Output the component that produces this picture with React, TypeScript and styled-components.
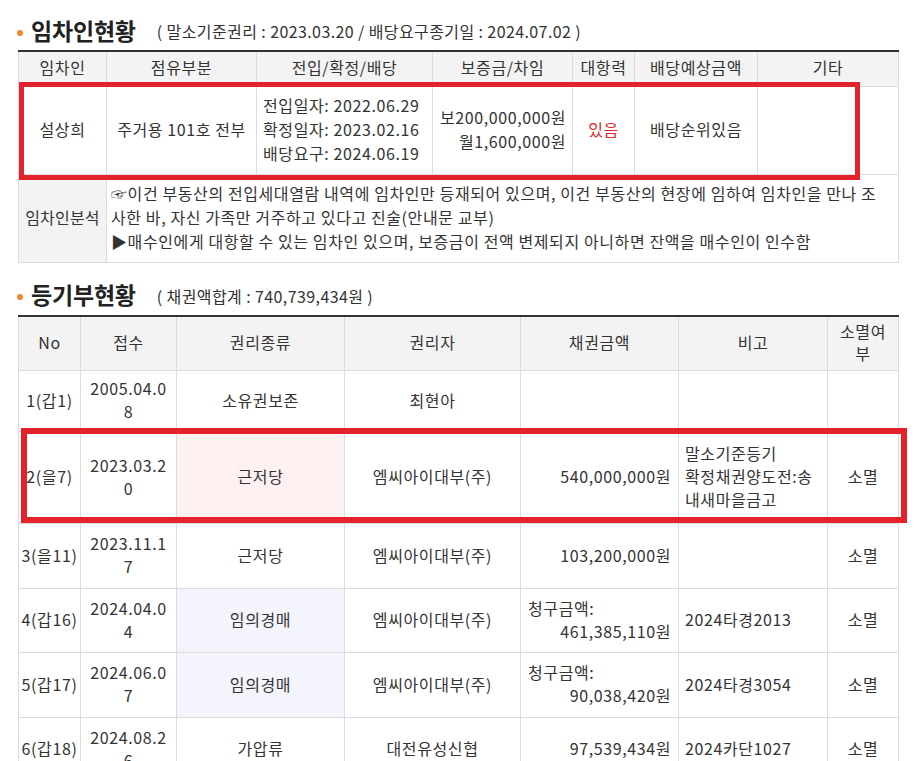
import React from "react";
import styled, { createGlobalStyle } from "styled-components";

const GlobalStyle = createGlobalStyle`
  html, body { margin: 0; padding: 0; background: #fff; }
  body {
    font-family: "Noto Sans CJK KR", "Noto Sans", sans-serif;
    color: #333;
  }
`;

const Page = styled.div`
  width: 880px;
  padding: 15px 0 0 18px;
`;

const SectionHeader = styled.div<{ $mt?: number }>`
  display: flex;
  align-items: center;
  height: 35px;
  margin-top: ${(p) => p.$mt ?? 0}px;
`;

const Dot = styled.span`
  width: 6px;
  height: 6px;
  border-radius: 50%;
  background: #f0892b;
  margin: 0 8px 0 -1px;
  flex: none;
`;

const Title = styled.h2`
  margin: 0;
  padding-bottom: 6px;
  font-size: 23px;
  font-weight: 700;
  color: #222;
  letter-spacing: -0.2px;
  line-height: 32px;
`;

const Sub = styled.span`
  margin-left: 21px;
  padding-bottom: 3px;
  font-size: 16px;
  color: #333;
  letter-spacing: 0.4px;
`;

const TableWrap = styled.div`
  position: relative;
  width: 880px;
`;

const Table = styled.table`
  width: 880px;
  table-layout: fixed;
  border-collapse: collapse;
  border-top: 2px solid #333;
  font-size: 16px;
  letter-spacing: 0.6px;
  color: #333;
`;

const Th = styled.th`
  background: #f3f3f3;
  font-weight: 400;
  border: 1px solid #dcdcdc;
  border-top: none;
  padding: 0 4px 3px;
  text-align: center;
  line-height: 22px;
`;

const Row = styled.tr<{ $h: number }>`
  height: ${(p) => p.$h}px;
`;

const Td = styled.td<{ $align?: string; $bg?: string; $red?: boolean; $lh?: number; $px?: number }>`
  border: 1px solid #dcdcdc;
  padding: 0 ${(p) => p.$px ?? 6}px 2px;
  text-align: ${(p) => p.$align ?? "center"};
  background: ${(p) => p.$bg ?? "#fff"};
  color: ${(p) => (p.$red ? "#e0252c" : "#333")};
  line-height: ${(p) => p.$lh ?? 23}px;
  vertical-align: middle;
`;

const LabelTd = styled(Td)`
  background: #f3f3f3;
  letter-spacing: 0.2px;
`;

const Line = styled.div<{ $align?: string }>`
  text-align: ${(p) => p.$align ?? "inherit"};
  white-space: nowrap;
`;

const Highlight = styled.div<{ $l: number; $t: number; $w: number; $h: number; $b: number }>`
  position: absolute;
  left: ${(p) => p.$l}px;
  top: ${(p) => p.$t}px;
  width: ${(p) => p.$w}px;
  height: ${(p) => p.$h}px;
  border: ${(p) => p.$b}px solid #e4222c;
  box-sizing: border-box;
  pointer-events: none;
`;

const tenantCols = [88, 150, 176, 140, 62, 123, 141];
const regCols = [62, 96, 168, 176, 158, 149, 71];

type RegRow = {
  h: number;
  no: string;
  date: [string, string];
  kind: string;
  kindBg?: string;
  holder: string;
  amount?: { label?: string; value: string };
  note: string[];
  gone: string;
};

const PINK = "#fdf1f1";
const BLUE = "#f3f4fc";

const regRows: RegRow[] = [
  { h: 61, no: "1(갑1)", date: ["2005.04.0", "8"], kind: "소유권보존", holder: "최현아", note: [], gone: "" },
  {
    h: 92,
    no: "2(을7)",
    date: ["2023.03.2", "0"],
    kind: "근저당",
    kindBg: PINK,
    holder: "엠씨아이대부(주)",
    amount: { value: "540,000,000원" },
    note: ["말소기준등기", "확정채권양도전:송", "내새마을금고"],
    gone: "소멸",
  },
  {
    h: 65,
    no: "3(을11)",
    date: ["2023.11.1", "7"],
    kind: "근저당",
    holder: "엠씨아이대부(주)",
    amount: { value: "103,200,000원" },
    note: [],
    gone: "소멸",
  },
  {
    h: 64,
    no: "4(갑16)",
    date: ["2024.04.0", "4"],
    kind: "임의경매",
    kindBg: BLUE,
    holder: "엠씨아이대부(주)",
    amount: { label: "청구금액:", value: "461,385,110원" },
    note: ["2024타경2013"],
    gone: "소멸",
  },
  {
    h: 65,
    no: "5(갑17)",
    date: ["2024.06.0", "7"],
    kind: "임의경매",
    kindBg: BLUE,
    holder: "엠씨아이대부(주)",
    amount: { label: "청구금액:", value: "90,038,420원" },
    note: ["2024타경3054"],
    gone: "소멸",
  },
  {
    h: 64,
    no: "6(갑18)",
    date: ["2024.08.2", "6"],
    kind: "가압류",
    holder: "대전유성신협",
    amount: { value: "97,539,434원" },
    note: ["2024카단1027"],
    gone: "소멸",
  },
];

export default function App() {
  return (
    <>
      <GlobalStyle />
      <Page>
        <SectionHeader>
          <Dot />
          <Title>임차인현황</Title>
          <Sub>( 말소기준권리 : 2023.03.20 / 배당요구종기일 : 2024.07.02 )</Sub>
        </SectionHeader>
        <TableWrap>
          <Table>
            <colgroup>
              {tenantCols.map((w, i) => (
                <col key={i} style={{ width: w }} />
              ))}
            </colgroup>
            <thead>
              <Row $h={35}>
                <Th>임차인</Th>
                <Th>점유부분</Th>
                <Th>전입/확정/배당</Th>
                <Th>보증금/차임</Th>
                <Th>대항력</Th>
                <Th>배당예상금액</Th>
                <Th>기타</Th>
              </Row>
            </thead>
            <tbody>
              <Row $h={88}>
                <Td>설상희</Td>
                <Td>주거용 101호 전부</Td>
                <Td $align="left" $lh={24}>
                  <Line>전입일자: 2022.06.29</Line>
                  <Line>확정일자: 2023.02.16</Line>
                  <Line>배당요구: 2024.06.19</Line>
                </Td>
                <Td $align="right" $lh={24}>
                  <Line>보200,000,000원</Line>
                  <Line>월1,600,000원</Line>
                </Td>
                <Td $red>있음</Td>
                <Td>배당순위있음</Td>
                <Td></Td>
              </Row>
              <Row $h={88}>
                <LabelTd $px={2}>임차인분석</LabelTd>
                <Td colSpan={6} $align="left" $lh={24} $px={4}>
                  <Line>☞이건 부동산의 전입세대열람 내역에 임차인만 등재되어 있으며, 이건 부동산의 현장에 임하여 임차인을 만나 조</Line>
                  <Line>사한 바, 자신 가족만 거주하고 있다고 진술(안내문 교부)</Line>
                  <Line>▶매수인에게 대항할 수 있는 임차인 있으며, 보증금이 전액 변제되지 아니하면 잔액을 매수인이 인수함</Line>
                </Td>
              </Row>
            </tbody>
          </Table>
          <Highlight $l={1} $t={32} $w={841} $h={98} $b={5} />
        </TableWrap>

        <SectionHeader $mt={17}>
          <Dot />
          <Title>등기부현황</Title>
          <Sub>( 채권액합계 : 740,739,434원 )</Sub>
        </SectionHeader>
        <TableWrap>
          <Table>
            <colgroup>
              {regCols.map((w, i) => (
                <col key={i} style={{ width: w }} />
              ))}
            </colgroup>
            <thead>
              <Row $h={55}>
                <Th>No</Th>
                <Th>접수</Th>
                <Th>권리종류</Th>
                <Th>권리자</Th>
                <Th>채권금액</Th>
                <Th>비고</Th>
                <Th>
                  소멸여
                  <br />부
                </Th>
              </Row>
            </thead>
            <tbody>
              {regRows.map((r, i) => (
                <Row key={i} $h={r.h}>
                  <Td $px={2}>{r.no}</Td>
                  <Td>
                    <Line>{r.date[0]}</Line>
                    <Line>{r.date[1]}</Line>
                  </Td>
                  <Td $bg={r.kindBg}>{r.kind}</Td>
                  <Td>{r.holder}</Td>
                  <Td $align="right" $px={7}>
                    {r.amount?.label && <Line $align="left">{r.amount.label}</Line>}
                    {r.amount && <Line>{r.amount.value}</Line>}
                  </Td>
                  <Td $align="left" $px={6}>
                    {r.note.map((n, j) => (
                      <Line key={j}>{n}</Line>
                    ))}
                  </Td>
                  <Td>{r.gone}</Td>
                </Row>
              ))}
            </tbody>
          </Table>
          <Highlight $l={3} $t={113} $w={886} $h={95} $b={6} />
        </TableWrap>
      </Page>
    </>
  );
}
